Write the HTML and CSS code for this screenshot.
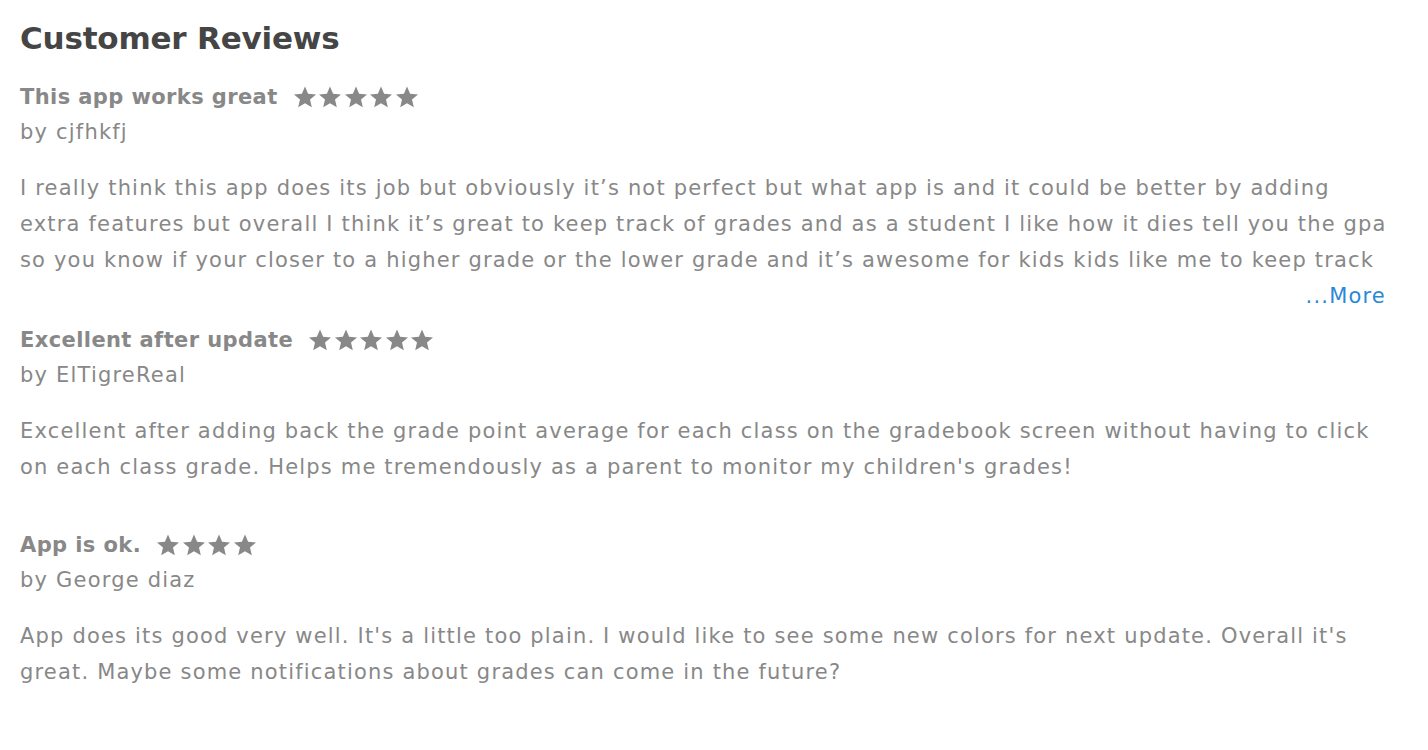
FILE: index.html
```html
<!DOCTYPE html>
<html>
<head>
<meta charset="utf-8">
<link rel="stylesheet" href="styles.css">
</head>
<body>
<svg width="0" height="0" class="defs">
  <defs>
    <symbol id="star" viewBox="0 0 24 24">
      <path d="M12 1.5l3.1 7.3 7.9.6-6 5.2 1.8 7.7L12 18.2 5.2 22.3 7 14.6 1 9.4l7.9-.6z"/>
    </symbol>
  </defs>
</svg>
<main class="reviews">
  <h1 class="heading">Customer Reviews</h1>

  <section class="review">
    <div class="title-row">
      <span class="title">This app works great</span>
      <span class="stars">
        <svg class="star"><use href="#star"/></svg><svg class="star"><use href="#star"/></svg><svg class="star"><use href="#star"/></svg><svg class="star"><use href="#star"/></svg><svg class="star"><use href="#star"/></svg>
      </span>
    </div>
    <div class="author">by cjfhkfj</div>
    <p class="body">I really think this app does its job but obviously it’s not perfect but what app is and it could be better by adding extra features but overall I think it’s great to keep track of grades and as a student I like how it dies tell you the gpa so you know if your closer to a higher grade or the lower grade and it’s awesome for kids kids like me to keep track</p>
    <div class="more-row"><a class="more" href="#">...More</a></div>
  </section>

  <section class="review review-short">
    <div class="title-row">
      <span class="title">Excellent after update</span>
      <span class="stars">
        <svg class="star"><use href="#star"/></svg><svg class="star"><use href="#star"/></svg><svg class="star"><use href="#star"/></svg><svg class="star"><use href="#star"/></svg><svg class="star"><use href="#star"/></svg>
      </span>
    </div>
    <div class="author">by ElTigreReal</div>
    <p class="body">Excellent after adding back the grade point average for each class on the gradebook screen without having to click on each class grade. Helps me tremendously as a parent to monitor my children's grades!</p>
  </section>

  <section class="review review-short">
    <div class="title-row">
      <span class="title">App is ok.</span>
      <span class="stars">
        <svg class="star"><use href="#star"/></svg><svg class="star"><use href="#star"/></svg><svg class="star"><use href="#star"/></svg><svg class="star"><use href="#star"/></svg>
      </span>
    </div>
    <div class="author">by George diaz</div>
    <p class="body">App does its good very well. It's a little too plain. I would like to see some new colors for next update. Overall it's great. Maybe some notifications about grades can come in the future?</p>
  </section>
</main>
</body>
</html>
```

FILE: styles.css
```css
html, body {
  margin: 0;
  padding: 0;
  background: #fff;
}
body {
  font-family: "DejaVu Sans", "Liberation Sans", sans-serif;
  color: #888;
}
.defs {
  position: absolute;
  width: 0;
  height: 0;
}
.reviews {
  width: 1372px;
  padding: 16px 20px 0 20px;
}
.heading {
  margin: 0 0 19px 0;
  font-size: 31px;
  line-height: 44px;
  font-weight: bold;
  letter-spacing: -0.2px;
  color: #454545;
}
.review {
  margin-bottom: 8px;
}
.review-short {
  margin-bottom: 42px;
}
.title-row {
  display: flex;
  align-items: center;
  gap: 15px;
  height: 36px;
}
.title {
  font-size: 21px;
  font-weight: bold;
  letter-spacing: 0.4px;
  color: #888;
}
.stars {
  display: flex;
  gap: 1.5px;
}
.star {
  width: 24px;
  height: 24px;
  fill: #888;
}
.author {
  font-size: 21px;
  letter-spacing: 1.2px;
  line-height: 34px;
}
.body {
  margin: 21px 0 0 0;
  font-size: 21px;
  letter-spacing: 1.18px;
  line-height: 36px;
}
.more-row {
  height: 36px;
  padding-right: 6px;
  text-align: right;
  font-size: 21px;
  letter-spacing: 1.2px;
  line-height: 36px;
}
.more {
  color: #2a88d8;
  text-decoration: none;
}
```
